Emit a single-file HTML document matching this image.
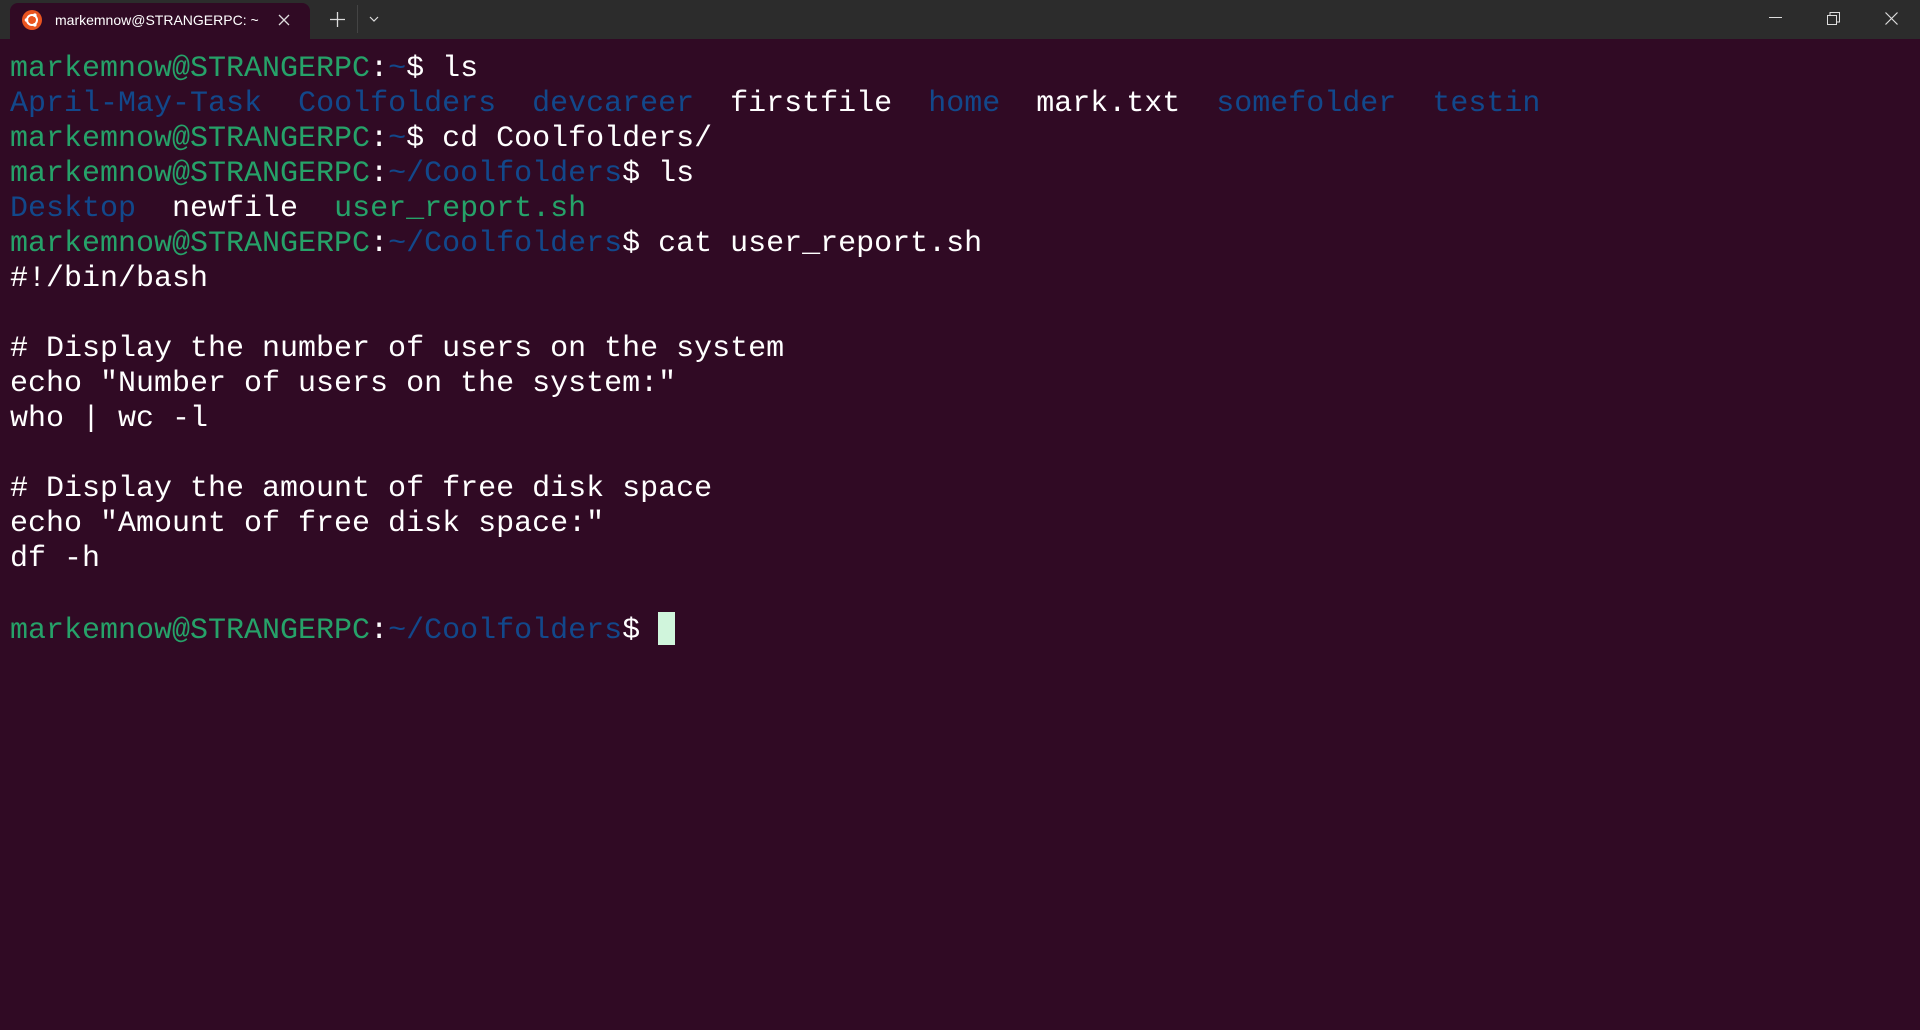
<!DOCTYPE html>
<html><head><meta charset="utf-8"><style>
html,body{margin:0;padding:0;width:1920px;height:1030px;background:#300a24;overflow:hidden}
#bar{position:absolute;left:0;top:0;width:1920px;height:39px;background:#2c2c2c}
#tab{position:absolute;left:10px;top:3px;width:300px;height:36px;background:#300a24;border-radius:8px 8px 0 0}
#tab .t{position:absolute;left:45px;top:9px;font:14px "Liberation Sans",sans-serif;color:#fff}
pre{position:absolute;left:10px;top:52px;margin:0;font:30px/35px "Liberation Mono","DejaVu Sans Mono",monospace;color:#fff;letter-spacing:0}
.g{color:#26a269}.b{color:#12488b}
.cur{display:inline-block;width:17px;height:33px;background:#d0f5dc;vertical-align:-7px}
</style></head><body>
<div id="bar">
<div id="tab">
<svg style="position:absolute;left:12px;top:7px" width="20" height="20" viewBox="0 0 20 20"><circle cx="10" cy="10" r="10" fill="#e95420"/><circle cx="10" cy="10" r="5" fill="none" stroke="#fff" stroke-width="2"/><circle cx="4.5" cy="10" r="1.8" fill="#fff"/><circle cx="12.8" cy="5.2" r="1.8" fill="#fff"/><circle cx="12.8" cy="14.8" r="1.8" fill="#fff"/></svg>
<span class="t">markemnow@STRANGERPC: ~</span>
<svg style="position:absolute;left:268px;top:11px" width="12" height="12"><path d="M1 1L11 11M11 1L1 11" stroke="#ddd" stroke-width="1.3"/></svg>
</div>
<svg style="position:absolute;left:330px;top:12px" width="15" height="15"><path d="M7.5 0V15M0 7.5H15" stroke="#ddd" stroke-width="1.3"/></svg>
<div style="position:absolute;left:357px;top:5px;width:1px;height:28px;background:#444"></div>
<svg style="position:absolute;left:369px;top:16px" width="10" height="6"><path d="M1 1L5 5L9 1" stroke="#ddd" fill="none" stroke-width="1.2"/></svg>
<div style="position:absolute;left:1769px;top:17px;width:13px;height:1.3px;background:#ddd"></div>
<svg style="position:absolute;left:1827px;top:12px" width="14" height="14"><rect x="0.5" y="3.5" width="9" height="9" fill="none" stroke="#ddd"/><path d="M3 3.5V0.5H12.5V10H9.5" fill="none" stroke="#ddd"/></svg>
<svg style="position:absolute;left:1885px;top:12px" width="13" height="13"><path d="M0.5 0.5L12.5 12.5M12.5 0.5L0.5 12.5" stroke="#ddd" stroke-width="1.2"/></svg>
</div>
<pre><span class="g">markemnow@STRANGERPC</span>:<span class="b">~</span>$ ls
<span class="b">April-May-Task</span>  <span class="b">Coolfolders</span>  <span class="b">devcareer</span>  firstfile  <span class="b">home</span>  mark.txt  <span class="b">somefolder</span>  <span class="b">testin</span>
<span class="g">markemnow@STRANGERPC</span>:<span class="b">~</span>$ cd Coolfolders/
<span class="g">markemnow@STRANGERPC</span>:<span class="b">~/Coolfolders</span>$ ls
<span class="b">Desktop</span>  newfile  <span class="g">user_report.sh</span>
<span class="g">markemnow@STRANGERPC</span>:<span class="b">~/Coolfolders</span>$ cat user_report.sh
#!/bin/bash

# Display the number of users on the system
echo "Number of users on the system:"
who | wc -l

# Display the amount of free disk space
echo "Amount of free disk space:"
df -h

<span class="g">markemnow@STRANGERPC</span>:<span class="b">~/Coolfolders</span>$ <span class="cur"></span></pre>
</body></html>
